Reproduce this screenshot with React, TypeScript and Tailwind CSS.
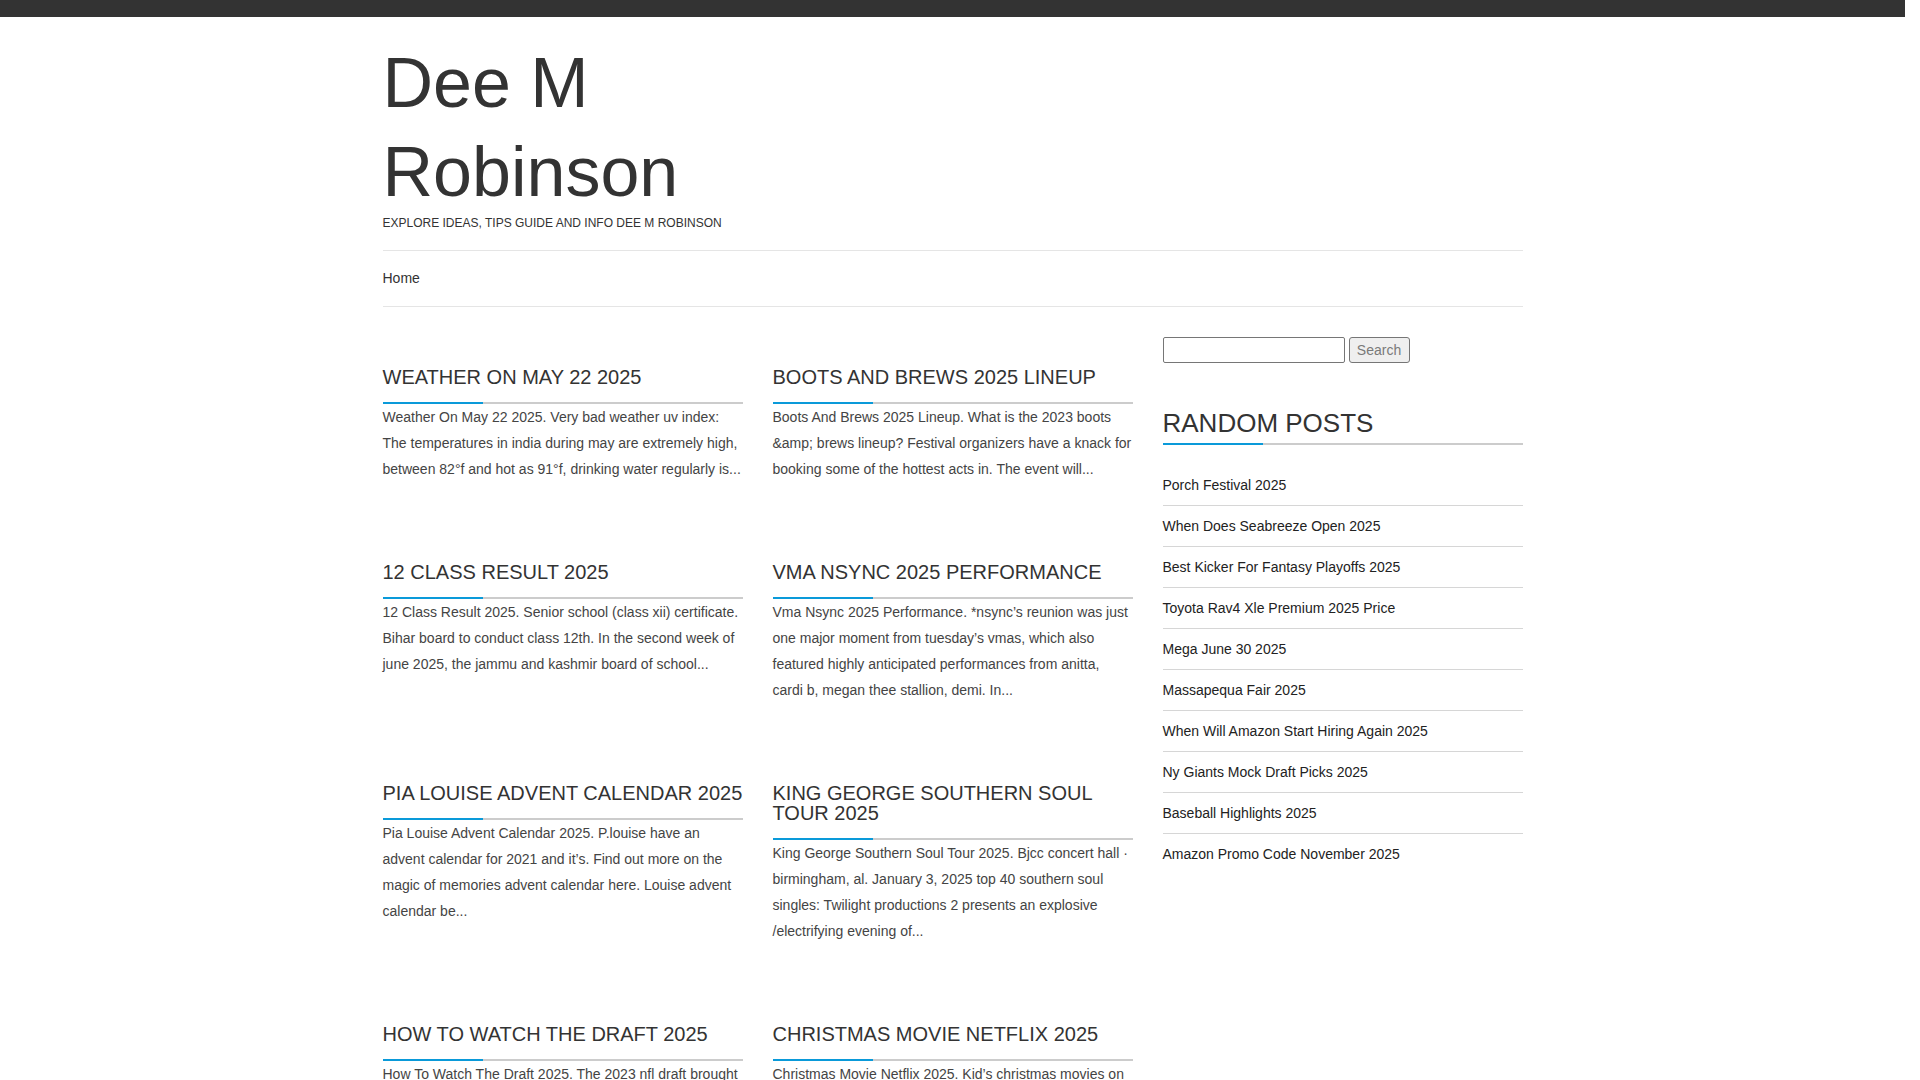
const posts = [
  {
    title: "Weather On May 22 2025",
    excerpt:
      "Weather On May 22 2025. Very bad weather uv index: The temperatures in india during may are extremely high, between 82°f and hot as 91°f, drinking water regularly is...",
  },
  {
    title: "Boots And Brews 2025 Lineup",
    excerpt:
      "Boots And Brews 2025 Lineup. What is the 2023 boots &amp; brews lineup? Festival organizers have a knack for booking some of the hottest acts in. The event will...",
  },
  {
    title: "12 Class Result 2025",
    excerpt:
      "12 Class Result 2025. Senior school (class xii) certificate. Bihar board to conduct class 12th. In the second week of june 2025, the jammu and kashmir board of school...",
  },
  {
    title: "Vma Nsync 2025 Performance",
    excerpt:
      "Vma Nsync 2025 Performance. *nsync’s reunion was just one major moment from tuesday’s vmas, which also featured highly anticipated performances from anitta, cardi b, megan thee stallion, demi. In...",
  },
  {
    title: "Pia Louise Advent Calendar 2025",
    excerpt:
      "Pia Louise Advent Calendar 2025. P.louise have an advent calendar for 2021 and it’s. Find out more on the magic of memories advent calendar here. Louise advent calendar be...",
  },
  {
    title: "King George Southern Soul Tour 2025",
    excerpt:
      "King George Southern Soul Tour 2025. Bjcc concert hall · birmingham, al. January 3, 2025 top 40 southern soul singles: Twilight productions 2 presents an explosive /electrifying evening of...",
  },
  {
    title: "How To Watch The Draft 2025",
    excerpt:
      "How To Watch The Draft 2025. The 2023 nfl draft brought plenty of surprises, and fans everywhere are already looking ahead to the next one. Here is...",
  },
  {
    title: "Christmas Movie Netflix 2025",
    excerpt:
      "Christmas Movie Netflix 2025. Kid’s christmas movies on netflix are a great way to get the whole family into the holiday spirit. The list...",
  },
];

const randomPosts = [
  "Porch Festival 2025",
  "When Does Seabreeze Open 2025",
  "Best Kicker For Fantasy Playoffs 2025",
  "Toyota Rav4 Xle Premium 2025 Price",
  "Mega June 30 2025",
  "Massapequa Fair 2025",
  "When Will Amazon Start Hiring Again 2025",
  "Ny Giants Mock Draft Picks 2025",
  "Baseball Highlights 2025",
  "Amazon Promo Code November 2025",
];

function Underline() {
  return (
    <div className="flex h-[2px]">
      <div className="w-[100px] bg-[#0a9ad9]" />
      <div className="flex-1 bg-[#cccccc]" />
    </div>
  );
}

function PostCard({ title, excerpt }: { title: string; excerpt: string }) {
  return (
    <article>
      <h2 className="pb-[15px] text-[20px] leading-[20px] uppercase text-[#333]">
        <a href="#">{title}</a>
      </h2>
      <Underline />
      <p className="text-[14px] leading-[26px] text-[#444]">{excerpt}</p>
    </article>
  );
}

function Sidebar() {
  return (
    <aside className="w-[360px] pt-[30px]">
      <form className="flex gap-[4px]" onSubmit={(e) => e.preventDefault()}>
        <input
          type="text"
          className="h-[26px] w-[182px] rounded-[2px] border border-[#767676] bg-white px-1 text-[14px]"
        />
        <button
          type="submit"
          className="h-[26px] w-[61px] rounded-[3px] border border-[#767676] bg-[#efefef] text-[14px] text-[#7a7a7a]"
        >
          Search
        </button>
      </form>

      <h3 className="mt-[47px] pb-[7px] text-[26px] leading-[26px] uppercase text-[#333]">
        Random Posts
      </h3>
      <Underline />

      <ul className="mt-[20px]">
        {randomPosts.map((item) => (
          <li
            key={item}
            className="border-b border-[#d6d6d6] py-[10px] text-[14px] leading-[20px] text-[#222] last:border-b-0"
          >
            <a href="#">{item}</a>
          </li>
        ))}
      </ul>
    </aside>
  );
}

export default function App() {
  return (
    <div className="h-screen overflow-y-scroll bg-white font-['Liberation_Sans',Arial,sans-serif] text-[#333] [&::-webkit-scrollbar]:w-[15px] [&::-webkit-scrollbar-track]:bg-[#f7f7f7] [&::-webkit-scrollbar-thumb]:bg-[#c8c8c8]">
      <div className="w-[1905px]">
        <div className="h-[17px] bg-[#333333]" />

        <div className="mx-auto w-[1140px] pb-[120px]">
          <header className="border-b border-[#e5e5e5] pt-[22px] pb-[21px]">
            <h1 className="w-[480px] text-[70px] leading-[89px] text-[#333]">
              <a href="#">Dee M Robinson</a>
            </h1>
            <p className="text-[12px] leading-[12px] uppercase text-[#333]">
              Explore ideas, tips guide and info Dee M Robinson
            </p>
          </header>

          <nav className="border-b border-[#e5e5e5] pt-[17px] pb-[18px] text-[14px] leading-[20px] text-[#333]">
            <a href="#">Home</a>
          </nav>

          <div className="flex gap-[30px]">
            <main className="grid w-[750px] grid-cols-2 content-start gap-x-[30px] gap-y-[80px] pt-[60px]">
              {posts.map((post) => (
                <PostCard key={post.title} {...post} />
              ))}
            </main>
            <Sidebar />
          </div>
        </div>
      </div>
    </div>
  );
}
